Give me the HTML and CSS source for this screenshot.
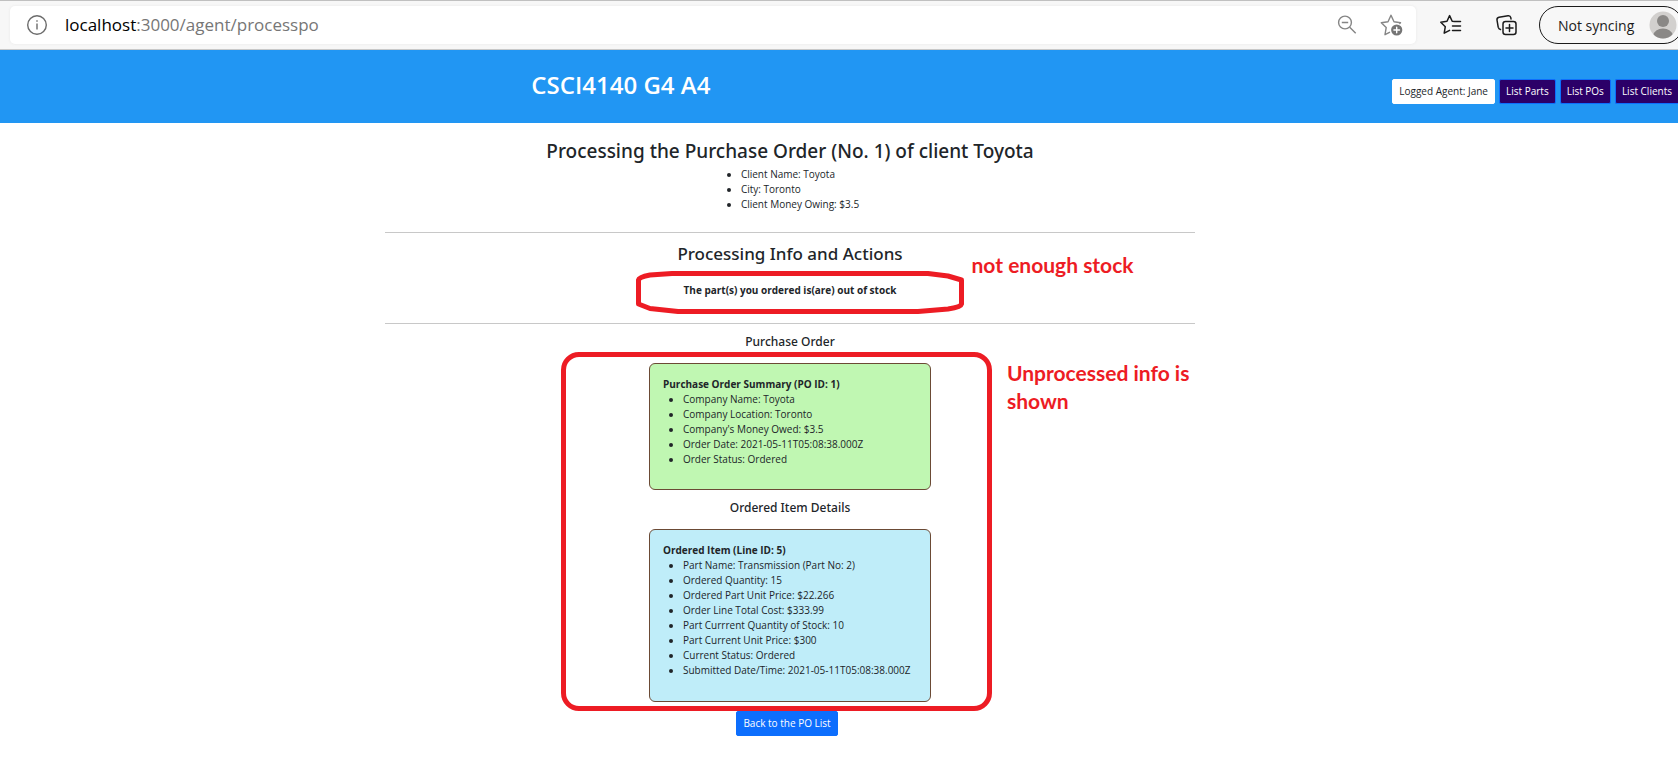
FILE: index.html
```html
<!DOCTYPE html>
<html lang="en">
<head>
<meta charset="utf-8">
<title>Process Purchase Order</title>
<link rel="stylesheet" href="styles.css">
</head>
<body>
<div class="browser-bar">
  <div class="address-box">
    <svg class="icon info" width="22" height="22" viewBox="0 0 22 22" fill="none" stroke="#6b6b6b" stroke-width="1.4"><circle cx="11" cy="11" r="9.3"/><path d="M11 9.5v6M11 6.2v1.6"/></svg>
    <div class="address"><span class="host">localhost</span>:3000/agent/processpo</div>
    <button class="tool zoom" aria-label="Zoom out"><svg width="22" height="22" viewBox="0 0 22 22" fill="none" stroke="#858585" stroke-width="1.4"><circle cx="9" cy="8.5" r="6.4"/><path d="M5.8 8.5h6.4M13.7 13.2l6 6"/></svg></button>
    <button class="tool" aria-label="Add to favorites"><svg width="24" height="24" viewBox="0 0 24 24" fill="none" stroke="#858585" stroke-width="1.4" stroke-linejoin="round" stroke-linecap="round"><path d="M20.500 9.700l-6.500-1L11 2.200l-3 6.500-6.700 1 4.900 4.900-1.200 7.100L9.500 19.300M20.500 9.700l-.8.900"/><circle cx="16.700" cy="17" r="5.600" fill="#757575" stroke="none"/><path d="M16.700 14.200v5.600M13.900 17h5.600" stroke="#fff"/></svg></button>
  </div>
  <button class="tool fav" aria-label="Favorites"><svg width="24" height="24" viewBox="0 0 24 24" fill="none" stroke="#1b1b1b" stroke-width="1.5" stroke-linejoin="round" stroke-linecap="round"><path d="M15.500 8.600l-2.300-.3L10.600 2.600 8 8.300l-6.200.9 4.500 4.500-1.100 6.500 5.400-2.900M15.500 8.600h6M13.500 13h8M13.500 17.500h8"/></svg></button>
  <button class="tool" aria-label="Collections"><svg width="24" height="24" viewBox="0 0 24 24" fill="none" stroke="#1b1b1b" stroke-width="1.500" stroke-linejoin="round" stroke-linecap="round"><rect x="8" y="8.500" width="13" height="13" rx="2.500"/><path d="M14.500 11.500v7M11 15h7M5.500 16.500c-1.500-.3-2-1-2.300-2.300L2 7c-.2-1.500.5-2.500 2-2.800l9-1.500c1.500-.2 2.500.5 2.800 2l.2 1.300"/></svg></button>
  <button class="profile">Not syncing
    <svg width="28" height="28" viewBox="0 0 28 28"><defs><clipPath id="face"><circle cx="14" cy="14" r="13.500"/></clipPath></defs><g clip-path="url(#face)"><rect width="28" height="28" fill="#d2d0ce"/><circle cx="14" cy="10" r="6" fill="#8a8886"/><ellipse cx="14" cy="24" rx="9.500" ry="6.500" fill="#8a8886"/></g></svg>
  </button>
</div>
<header class="site-header">
  <h1>CSCI4140 G4 A4</h1>
  <nav class="site-nav">
    <span class="btn agent">Logged Agent: Jane</span>
    <a class="btn dark" href="#parts">List Parts</a>
    <a class="btn dark" href="#pos">List POs</a>
    <a class="btn dark last" href="#clients">List Clients</a>
  </nav>
</header>
<div class="page">
<main class="content">
  <section class="client">
    <h2>Processing the Purchase Order (No. 1) of client Toyota</h2>
    <ul>
      <li>Client Name: Toyota</li>
      <li>City: Toronto</li>
      <li>Client Money Owing: $3.5</li>
    </ul>
  </section>
  <section class="actions">
    <h3>Processing Info and Actions</h3>
    <div class="message">The part(s) you ordered is(are) out of stock
      <svg class="mark mark-message" viewBox="0 0 328 43" fill="none" stroke="#ed1c24" stroke-width="5" stroke-linejoin="round"><path d="M36 2.500H292L312 5 325.500 9V33Q325 36 312 38L282 40.500H42L14 37.500 2.500 33V9Q3 6 14 4Z"/></svg>
      <strong class="note note-stock">not enough stock</strong>
    </div>
  </section>
  <section class="order">
    <h4>Purchase Order</h4>
    <article class="card green">
      <h5>Purchase Order Summary (PO ID: 1)</h5>
      <ul>
        <li>Company Name: Toyota</li>
        <li>Company Location: Toronto</li>
        <li>Company's Money Owed: $3.5</li>
        <li>Order Date: 2021-05-11T05:08:38.000Z</li>
        <li>Order Status: Ordered</li>
      </ul>
    </article>
    <h4 class="details">Ordered Item Details</h4>
    <article class="card blue">
      <h5>Ordered Item (Line ID: 5)</h5>
      <ul>
        <li>Part Name: Transmission (Part No: 2)</li>
        <li>Ordered Quantity: 15</li>
        <li>Ordered Part Unit Price: $22.266</li>
        <li>Order Line Total Cost: $333.99</li>
        <li>Part Currrent Quantity of Stock: 10</li>
        <li>Part Current Unit Price: $300</li>
        <li>Current Status: Ordered</li>
        <li>Submitted Date/Time: 2021-05-11T05:08:38.000Z</li>
      </ul>
    </article>
    <div class="mark mark-order"></div>
    <strong class="note note-order">Unprocessed info is<br>shown</strong>
  </section>
  <a class="btn back" href="#pos">Back to the PO List</a>
</main>
</div>
</body>
</html>
```
FILE: styles.css
```css
* { box-sizing: border-box; }
body {
  margin: 0;
  background: #fff;
  color: #212529;
  font-family: "Open Sans", "Noto Sans", sans-serif;
  font-size: 10px;
  line-height: 15px;
  overflow-x: hidden;
}
h1, h2, h3, h4, h5, ul { margin: 0; font-weight: 500; }
button { font: inherit; color: inherit; cursor: pointer; }

.browser-bar {
  display: flex;
  align-items: center;
  height: 50px;
  padding-left: 10px;
  background: #f7f7f7;
  border-bottom: 1px solid #c8c8c8;
  border-top: 1px solid #c0c0c0;
  overflow: hidden;
}
.address-box {
  flex: 1;
  display: flex;
  align-items: center;
  height: 38px;
  padding: 0 12px 0 16px;
  background: #fff;
  border-radius: 5px;
  box-shadow: 0 0 3px #e8e8e8;
}
.address {
  flex: 1;
  margin-left: 17px;
  color: #767676;
  font-size: 17px;
  line-height: 24px;
}
.host { color: #000; }
.tool {
  display: flex;
  padding: 0;
  border: 0;
  background: none;
}
.tool.zoom { margin-right: 22px; }
.tool.fav { margin: 0 32px 0 23px; }
.profile {
  display: flex;
  align-items: center;
  justify-content: space-between;
  flex: none;
  width: 144px;
  height: 38px;
  margin: 0 -5px 0 20px;
  padding: 0 5px 0 18px;
  border: 1px solid #1b1b1b;
  border-radius: 19px;
  background: #f7f7f7;
  color: #1b1b1b;
  font-size: 14px;
}

.site-header {
  display: flex;
  align-items: flex-start;
  justify-content: space-between;
  height: 73px;
  background: #2196f3;
}
.site-header h1 {
  width: 74%;
  padding: 18px 0 0;
  text-align: center;
  color: #fff;
  font-size: 24px;
  line-height: 34px;
  font-weight: 600;
}
.site-nav {
  display: flex;
  flex: none;
  gap: 4px;
  padding-top: 29px;
}
.btn {
  display: block;
  padding: 4px 6px;
  border: 1px solid #0d6efd;
  border-radius: 2px;
  background: #0d6efd;
  color: #fff;
  line-height: 15px;
  text-decoration: none;
  white-space: nowrap;
}
.btn.agent { background: #fff; border-color: #fff; color: #212529; }
.btn.dark { background: #2b0068; }
.btn.last { border-right: 0; border-radius: 2px 0 0 2px; }

.page { padding-right: 98px; }
.content {
  display: flex;
  flex-direction: column;
  align-items: center;
  max-width: 810px;
  margin: 0 auto;
}
.client, .actions, .order {
  display: flex;
  flex-direction: column;
  align-items: center;
  width: 100%;
}
.client {
  padding: 16px 0 20px;
  border-bottom: 1px solid #c8c8c8;
}
h2, h3, h4 { font-family: "Noto Sans", sans-serif; }
.client h2 { font-size: 19px; line-height: 24px; margin-bottom: 4px; }
.client ul { padding-left: 20px; }
.actions {
  padding: 10px 0 25px;
  border-bottom: 1px solid #c8c8c8;
}
.actions h3 { font-size: 17px; line-height: 22px; margin-bottom: 18px; }
.message { position: relative; font-weight: 700; }
.order { position: relative; padding-top: 9px; }
.order h4 { font-size: 12px; line-height: 18px; margin-bottom: 12px; }
.order h4.details { margin: 9px 0 12px; }
.card {
  width: 282px;
  padding: 13px;
  border: 1px solid #6b4a35;
  border-radius: 6px;
}
.card h5 { font-size: 10px; font-weight: 700; }
.card ul { padding: 0 0 10px 20px; }
.green { background: #c0f7b2; padding-bottom: 12px; }
.blue { background: #bfedf9; }
.back { margin-top: 9px; margin-right: 6px; }

.mark { position: absolute; pointer-events: none; }
.mark-message {
  width: 328px;
  height: 43px;
  top: -12px;
  left: 50%;
  margin-left: -154px;
}
.mark-order {
  top: 28px;
  left: 176px;
  width: 431px;
  bottom: -9px;
  border: 5px solid #ed1c24;
  border-radius: 18px;
}
.note {
  position: absolute;
  color: #ed1c24;
  font-family: Lato, sans-serif;
  font-size: 21px;
  line-height: 28px;
  font-weight: 700;
  white-space: nowrap;
}
.note-stock { top: -32px; left: 288px; }
.note-order { top: 35px; left: 622px; }
```
